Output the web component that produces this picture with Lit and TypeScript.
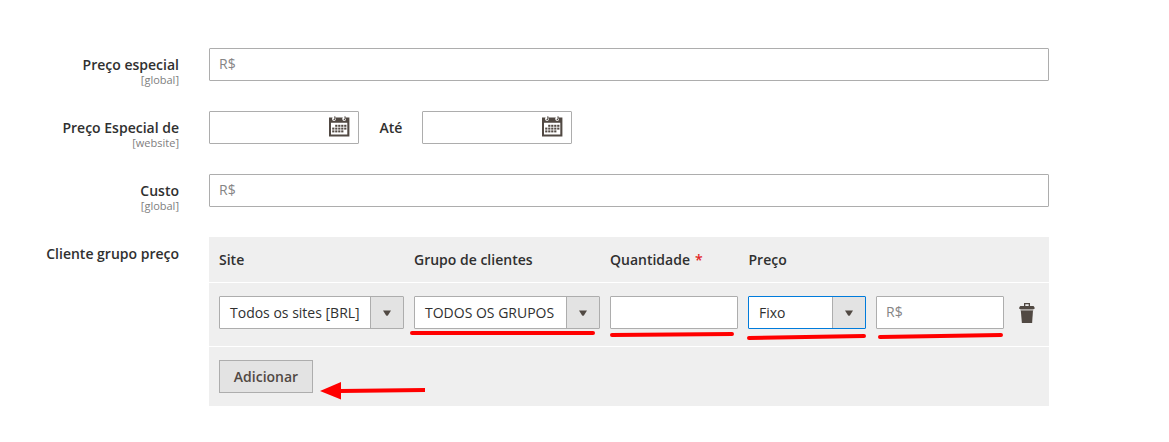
import { LitElement, html, css, svg } from "lit";
import { customElement, property } from "lit/decorators.js";

@customElement("calendar-icon")
class CalendarIcon extends LitElement {
  static styles = css`
    :host { display: block; width: 21px; height: 21px; }
    svg { display: block; }
  `;
  render() {
    const dots = [0, 1, 2].flatMap((r) =>
      [0, 1, 2, 3, 4].filter((c) => !(r === 0 && c === 0) && !(r === 2 && c === 4))
        .map((c) => svg`<rect x=${3.2 + c * 3} y=${8.8 + r * 2.8} width="2.2" height="2" />`)
    );
    return html`<svg width="21" height="21" viewBox="0 0 21 21" fill="#514943">
      <path fill-rule="evenodd" d="M0 1.500h20.400V20.500H0zM2 6.800v11.700h16.300V6.800z" />
      <g fill="#fff"><rect x="3.200" y="0.500" width="3.600" height="4.500" rx="1.800" /><rect x="13.400" y="0.500" width="3.600" height="4.500" rx="1.800" /></g>
      <g fill="none" stroke="#514943" stroke-width="1.200"><path d="M4.500 3.500c1.500.3 1.800-1 1.200-3.200M14.700 3.500c1.500.3 1.800-1 1.200-3.200" /></g>
      ${dots}
    </svg>`;
  }
}

@customElement("text-field")
class TextField extends LitElement {
  @property() prefix = "";
  @property({ type: Boolean }) date = false;
  static styles = css`
    :host { display: block; }
    .box {
      box-sizing: border-box; height: 33px; border: 1px solid #adadad; border-radius: 1px;
      background: #fff; display: flex; align-items: center; justify-content: space-between;
      padding: 0 9px;
    }
    .prefix { color: #858585; line-height: 19px; padding-bottom: 2px; }
    .date { justify-content: flex-end; padding: 0 8px 2px; }
  `;
  render() {
    return html`<div class="box ${this.date ? "date" : ""}">
      ${this.prefix ? html`<span class="prefix">${this.prefix}</span>` : ""}
      ${this.date ? html`<calendar-icon></calendar-icon>` : ""}
    </div>`;
  }
}

@customElement("select-field")
class SelectField extends LitElement {
  @property() value = "";
  @property({ type: Boolean }) active = false;
  static styles = css`
    :host { display: block; }
    .box {
      box-sizing: border-box; height: 33px; border: 1px solid #adadad; border-radius: 1px;
      background: #fff; display: grid; grid-template-columns: 1fr 33px; color: #303030;
    }
    .active { border-color: #007bdb; }
    .value { padding-left: 10px; line-height: 31px; white-space: nowrap; }
    .toggle {
      background: #e3e3e3; border-left: 1px solid #adadad; box-sizing: border-box;
      display: flex; align-items: center; justify-content: center;
    }
  `;
  render() {
    return html`<div class="box ${this.active ? "active" : ""}">
      <span class="value">${this.value}</span>
      <span class="toggle"><svg width="8" height="6" viewBox="0 0 8 6"><path d="M0 0.500h8L5 5.200q-1 1-2 0z" fill="#514943" /></svg></span>
    </div>`;
  }
}

@customElement("app-root")
class AppRoot extends LitElement {
  static styles = css`
    :host {
      display: block; position: relative; box-sizing: border-box; width: 1169px; height: 442px;
      padding-top: 48px; background: #fff; overflow: hidden;
      font: 14px/19px "Open Sans", sans-serif; color: #303030;
    }
    .form { display: grid; row-gap: 30px; }
    .row { display: grid; grid-template-columns: 179px 840px; column-gap: 30px; min-height: 33px; }
    .label { text-align: right; font-weight: 600; padding-top: 7px; height: 26px; }
    .scope { display: block; font-size: 11px; font-weight: 400; line-height: 12px; color: #808080; }
    .dates { display: grid; grid-template-columns: 150px 63px 150px; }
    .until { font-weight: 600; padding: 7px 0 0 20.5px; }
    .table { background: #efefef; height: 169px; }
    .cells {
      display: grid; grid-template-columns: 185px 186px 128px 118px 128px 1fr; column-gap: 10px;
      padding: 0 10px; border-bottom: 1px solid #fff;
    }
    .head { height: 45px; font-weight: 600; line-height: 45px; }
    .price { padding-left: 0.5px; }
    .body { height: 50px; padding-top: 13px; }
    .required { color: #e22626; margin-left: 5px; }
    .foot { padding: 13px 10px; }
    button {
      display: block; box-sizing: border-box; width: 94px; height: 33px; padding: 0;
      border: 1px solid #adadad; background: #e3e3e3; color: #514943;
      font: 600 14px/31px "Open Sans", sans-serif;
    }
    .trash { padding: 7px 0 0 5px; }
    .trash svg { display: block; }
    .marks { position: absolute; left: 0; top: 0; pointer-events: none; }
  `;
  label(text: string, scope = "") {
    return html`<div class="label">${text}${scope ? html`<span class="scope">${scope}</span>` : ""}</div>`;
  }
  render() {
    return html`
      <div class="form">
        <div class="row">${this.label("Preço especial", "[global]")}<text-field prefix="R$"></text-field></div>
        <div class="row">
          ${this.label("Preço Especial de", "[website]")}
          <div class="dates"><text-field date></text-field><span class="until">Até</span><text-field date></text-field></div>
        </div>
        <div class="row">${this.label("Custo", "[global]")}<text-field prefix="R$"></text-field></div>
        <div class="row">
          ${this.label("Cliente grupo preço")}
          <div class="table">
            <div class="cells head">
              <span>Site</span><span>Grupo de clientes</span>
              <span>Quantidade<span class="required">*</span></span><span class="price">Preço</span>
            </div>
            <div class="cells body">
              <select-field value="Todos os sites [BRL]"></select-field>
              <select-field value="TODOS OS GRUPOS"></select-field>
              <text-field></text-field>
              <select-field value="Fixo" active></select-field>
              <text-field prefix="R$"></text-field>
              <div class="trash">
                <svg width="16" height="20" viewBox="0 0 16 20" fill="#514943">
                  <path fill-rule="evenodd" d="M5 0h6v3h3.500l1 1.200V6H0.300V4.200L1.300 3H5zM6.300 1.200V3h3.400V1.200z" />
                  <path d="M1.300 6h13.200v1.500H1.300z" fill="#aaa6a3" />
                  <path d="M1.800 7.500h12.200L13.100 20H2.900z" />
                </svg>
              </div>
            </div>
            <div class="foot"><button>Adicionar</button></div>
          </div>
        </div>
      </div>
      <svg class="marks" width="1169" height="442" viewBox="0 0 1169 442" fill="none" stroke="#f00" stroke-width="4" stroke-linecap="round">
        <path d="M412 333H593" /><path d="M612 335L732 334" />
        <path d="M749 338L864 336" /><path d="M880 337L1001 335" />
        <path d="M340 391L425 390" stroke-linecap="butt" />
        <path d="M320 391L341 382V399.500z" fill="#f00" stroke="none" />
      </svg>
    `;
  }
}
